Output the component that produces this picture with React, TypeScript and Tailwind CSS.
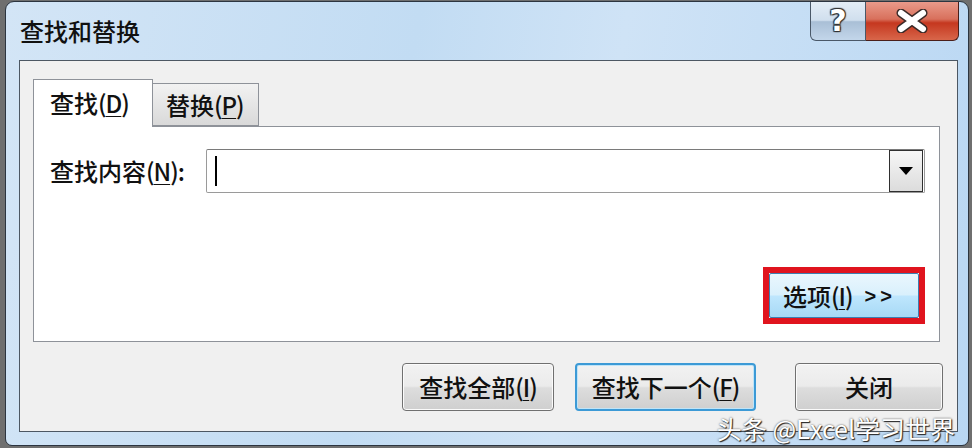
import React from "react";

const font = { fontFamily: '"Noto Sans CJK SC", "Noto Sans", sans-serif' };

const Key = ({ k }: { k: string }) => (
  <span className="tracking-[-1px]">
    (<span className="underline underline-offset-[3px] decoration-1">{k}</span>)
  </span>
);

const WinButton = ({ children, focused, className }: { children: React.ReactNode; focused?: boolean; className?: string }) => (
  <div
    className={
      "h-[48px] rounded-[4px] flex items-center justify-center text-[24px] text-[#111] bg-[linear-gradient(#f2f2f2_0%,#ebebeb_48%,#dddddd_52%,#cfcfcf_100%)] " +
      (focused
        ? "border-2 border-[#3c9ad6] shadow-[inset_0_0_0_1px_#bfe4f8]"
        : "border border-[#707070] shadow-[inset_0_0_0_1px_#fbfbfb]") +
      " " +
      (className ?? "")
    }
  >
    {children}
  </div>
);

export default function App() {
  return (
    <div className="w-[972px] h-[448px] bg-[#6f6f6f] pl-[5px] pt-[1px] relative overflow-hidden font-medium" style={font}>
      <div className="w-[964px] h-[445px] rounded-t-[9px] rounded-b-[7px] border border-[#2c3540] bg-[linear-gradient(100deg,#d3e5f6_0%,#c2dcf3_40%,#cfe3f6_60%,#b9d7f3_100%)] flex flex-col pl-[13px] pr-[10px] pb-[13px]">
        {/* title bar */}
        <div className="h-[58px] flex items-start shrink-0">
          <div className="self-center ml-px text-[24px] text-[#111] leading-none">查找和替换</div>
          <div className="ml-auto flex mr-[-1px]">
            <div className="w-[56px] h-[39px] rounded-bl-[6px] border border-t-0 border-[#4a5868] bg-[linear-gradient(#e4edf6_0%,#d0dfee_48%,#a9bfd6_52%,#c3d6ea_100%)] flex items-center justify-center">
              <span className="text-[30px] font-bold text-white leading-none [text-shadow:0_0_1px_#222,1px_1px_1px_#333,-1px_-1px_1px_#333,1px_-1px_1px_#333,-1px_1px_1px_#333]" style={{ fontFamily: '"DejaVu Sans", sans-serif' }}>
                ?
              </span>
            </div>
            <div className="w-[93px] h-[39px] rounded-br-[6px] border border-l-0 border-t-0 border-[#4a1f1a] bg-[linear-gradient(#e99a8a_0%,#d8705c_45%,#c5371f_55%,#d8664a_100%)] flex items-center justify-center">
              <svg width="32" height="24" viewBox="0 0 32 24">
                <path d="M5 4 L27 20 M27 4 L5 20" stroke="#3a2a28" strokeWidth="9" strokeLinecap="round" />
                <path d="M5 4 L27 20 M27 4 L5 20" stroke="#ffffff" strokeWidth="6" strokeLinecap="round" />
              </svg>
            </div>
          </div>
        </div>

        {/* client area */}
        <div className="flex-1 border border-[#4c5763] bg-[#f0f0f0] flex flex-col pl-[13px] pt-[18px]">
          {/* tabs */}
          <div className="flex items-end h-[47px]">
            <div className="w-[120px] h-[48px] -mb-px relative z-10 bg-white border border-b-0 border-[#8e9299] flex items-start pt-[10px] pl-[16px] text-[24px] text-[#111] leading-[26px]">
              查找<Key k="D" />
            </div>
            <div className="w-[106px] h-[43px] border border-l-0 border-[#8e9299] bg-[linear-gradient(#f2f2f2,#d9d9d9)] flex items-start pt-[8px] pl-[13px] text-[24px] text-[#111] leading-[26px]">
              替换<Key k="P" />
            </div>
          </div>

          {/* tab panel */}
          <div className="w-[907px] h-[216px] bg-white border border-[#8e9299] flex flex-col justify-between pt-[22px] pb-[17px] pr-[14px]">
            <div className="flex items-center pl-[16px]">
              <div className="w-[156px] text-[24px] text-[#111] leading-none">
                查找内容<Key k="N" />:
              </div>
              <div className="flex-1 h-[44px] border border-[#9a9a9a] border-t-[#7a7a7a] rounded-[2px] flex items-center pl-[8px] pr-[1px]">
                <div className="w-[2px] h-[30px] bg-black" />
                <div className="ml-auto w-[34px] h-[42px] border border-[#2f2f2f] bg-[linear-gradient(#f6f6f6,#dcdcdc)] flex items-center justify-center">
                  <svg width="14" height="8" viewBox="0 0 14 8">
                    <path d="M0 0 H14 L7 8 Z" fill="#000" />
                  </svg>
                </div>
              </div>
            </div>
            <div className="flex justify-end">
              <div className="w-[162px] h-[57px] border-[6px] border-[#e0141e] flex">
                <div className="flex-1 bg-[linear-gradient(#eaf6fd_0%,#d9f0fc_48%,#bee6fd_52%,#a7d9f5_100%)] border border-[#3c7fb1] rounded-[2px] flex items-center pl-[13px] text-[24px] text-[#111] leading-none">
                  选项<Key k="I" />
                  <span className="ml-[12px] tracking-[4px] text-[20px] font-bold" style={{ fontFamily: '"Liberation Sans", sans-serif' }}>
                    &gt;&gt;
                  </span>
                </div>
              </div>
            </div>
          </div>

          {/* buttons */}
          <div className="flex justify-end pr-[14px] pt-[21px]">
            <WinButton className="w-[152px]">
              查找全部<Key k="I" />
            </WinButton>
            <WinButton focused className="w-[181px] ml-[21px]">
              查找下一个<Key k="F" />
            </WinButton>
            <WinButton className="w-[148px] ml-[39px]">关闭</WinButton>
          </div>
        </div>
      </div>

      {/* watermark */}
      <div className="absolute right-[17px] bottom-[7px] text-[25px] font-normal leading-none text-white [text-shadow:1px_1px_1px_#222,0_0_2px_#444]">
        头条 @Excel学习世界
      </div>
    </div>
  );
}
